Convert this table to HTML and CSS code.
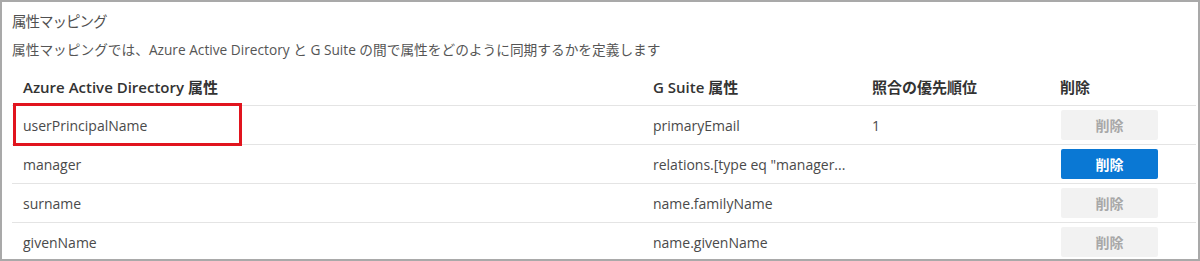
FILE: index.html
```html
<!DOCTYPE html>
<html lang="ja">
<head>
    <meta charset="UTF-8">
    <meta name="viewport" content="width=device-width, initial-scale=1.0">
    <title>属性マッピング</title>
    <link rel="stylesheet" href="styles.css">
</head>
<body>

    <div class="panel">
        <div class="title">属性マッピング</div>
        <div class="desc">属性マッピングでは、Azure Active Directory と G Suite の間で属性をどのように同期するかを定義します</div>

        <table class="mapping">
            <thead>
                <tr>
                    <th class="col-src">Azure Active Directory 属性</th>
                    <th class="col-dst">G Suite 属性</th>
                    <th class="col-prio">照合の優先順位</th>
                    <th class="col-del">削除</th>
                </tr>
            </thead>
            <tbody>
                <tr>
                    <td class="marked">userPrincipalName<span class="highlight"></span></td>
                    <td>primaryEmail</td>
                    <td>1</td>
                    <td><button class="btn" disabled>削除</button></td>
                </tr>
                <tr>
                    <td>manager</td>
                    <td>relations.[type eq "manager...</td>
                    <td></td>
                    <td><button class="btn primary">削除</button></td>
                </tr>
                <tr>
                    <td>surname</td>
                    <td>name.familyName</td>
                    <td></td>
                    <td><button class="btn" disabled>削除</button></td>
                </tr>
                <tr>
                    <td>givenName</td>
                    <td>name.givenName</td>
                    <td></td>
                    <td><button class="btn" disabled>削除</button></td>
                </tr>
            </tbody>
        </table>
    </div>

</body>
</html>
```

FILE: styles.css
```css
body {
    margin: 0;
    background-color: #fff;
    font-family: "Open Sans", "Noto Sans CJK JP", sans-serif;
    color: #4a4a4a;
}
.panel {
    box-sizing: border-box;
    width: 1200px;
    height: 261px;
    border: 2px solid #a9a9a9;
    padding: 10px 0 0 10px;
    overflow: hidden;
}
.title {
    font-size: 14.5px;
    line-height: 20px;
    letter-spacing: -1px;
    color: #505050;
}
.desc {
    margin-top: 8px;
    font-size: 13.7px;
    line-height: 20px;
    color: #555;
}
.mapping {
    margin-top: 7px;
    width: 1184px;
    border-collapse: collapse;
    font-size: 14px;
}
.mapping th,
.mapping td {
    padding: 0 0 0 11px;
    text-align: left;
    height: 38px;
    border-bottom: 1px solid #e4e4e4;
    white-space: nowrap;
}
.mapping th {
    font-size: 15px;
    font-weight: 600;
    color: #333;
}
.mapping td {
    color: #4a4a4a;
}
.mapping tbody tr:last-child td {
    border-bottom: none;
}
.col-src {
    width: 619px;
}
.col-dst {
    width: 208px;
}
.col-prio {
    width: 177px;
}
.marked {
    position: relative;
}
.highlight {
    position: absolute;
    left: 1px;
    top: -3px;
    width: 223px;
    height: 37px;
    border: 3px solid #e1141e;
}
.btn {
    width: 97px;
    height: 30px;
    margin-left: 1px;
    border: none;
    border-radius: 2px;
    font-family: "Noto Sans CJK JP", sans-serif;
    font-size: 14px;
    font-weight: 700;
    background-color: #f2f2f2;
    color: #a8a8a8;
}
.btn.primary {
    background-color: #0a78d4;
    color: #fff;
    cursor: pointer;
}
```
